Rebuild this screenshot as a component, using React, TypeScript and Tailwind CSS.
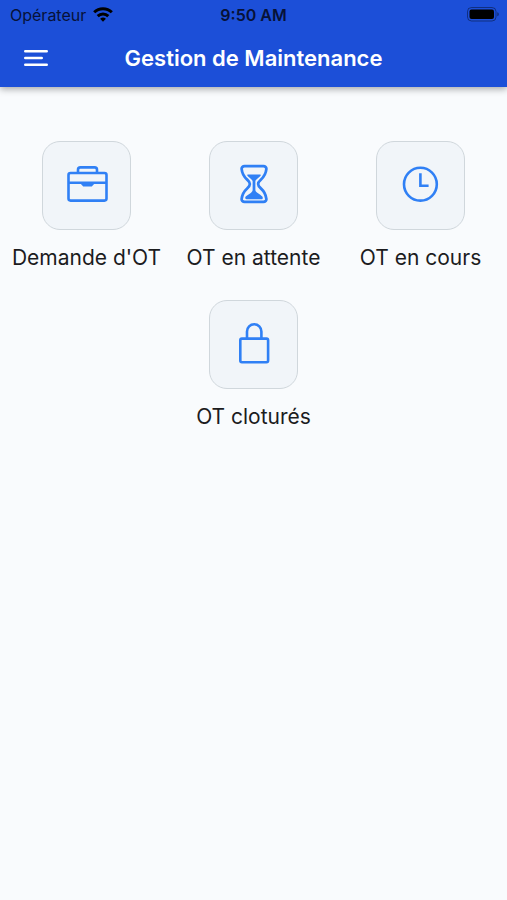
import React from 'react';
import { IoHourglassOutline } from 'react-icons/io5';

interface MenuItem {
  label: string;
  icon: React.ReactNode;
}

function BriefcaseIcon() {
  return (
    <svg className="size-12" viewBox="0 0 48 48" fill="none" stroke="currentColor" strokeWidth="2.6" strokeLinejoin="round" aria-hidden="true">
      <rect x="5.5" y="13" width="38" height="27.6" rx="2" />
      <path d="M15 12.8V9.8a2.4 2.4 0 0 1 2.4-2.4h14.200a2.4 2.4 0 0 1 2.4 2.4v3" />
      <path d="M5.7 22.8h37.6" />
      <path d="M17.9 22.8v1.200l2.300 2.600h8.600l2.300-2.600v-1.200z" fill="currentColor" stroke="none" />
    </svg>
  );
}

function ClockIcon() {
  return (
    <svg className="size-12" viewBox="0 0 48 48" fill="none" stroke="currentColor" strokeWidth="2.6" aria-hidden="true">
      <circle cx="23.4" cy="24.2" r="16.4" />
      <path d="M23.4 13.200v12.500h8.200" />
    </svg>
  );
}

function LockIcon() {
  return (
    <svg className="size-12" viewBox="0 0 48 48" fill="none" stroke="currentColor" strokeWidth="2.6" strokeLinejoin="round" aria-hidden="true">
      <rect x="10.300" y="19.6" width="27.8" height="23.6" rx="1.6" />
      <path d="M17 19.600v-7.200a7.200 7.200 0 0 1 14.400 0v7.200" />
    </svg>
  );
}

const items: MenuItem[] = [
  { label: "Demande d'OT", icon: <BriefcaseIcon /> },
  { label: 'OT en attente', icon: <IoHourglassOutline className="size-11" aria-hidden="true" /> },
  { label: 'OT en cours', icon: <ClockIcon /> },
  { label: 'OT cloturés', icon: <LockIcon /> },
];

function StatusBar() {
  return (
    <div className="grid h-[30px] grid-cols-3 items-center px-2 text-[#071238]">
      <div className="flex items-center gap-[7px] pl-0.5">
        <span className="text-base">Opérateur</span>
        <svg className="h-4 w-5 text-black" viewBox="0 0 20 16" fill="none" stroke="currentColor" strokeWidth="3" aria-hidden="true">
          <path d="M1.2 5.3a12.6 12.6 0 0 1 17.6 0" />
          <path d="M4.700 9.200a7.600 7.600 0 0 1 10.600 0" />
          <path d="M10 14.700 7.100 11.800a4.200 4.200 0 0 1 5.800 0z" fill="currentColor" stroke="none" />
        </svg>
      </div>
      <span className="text-center text-base font-semibold">9:50 AM</span>
      <svg className="h-4 w-8 justify-self-end text-black" viewBox="0 0 32 16" aria-hidden="true">
        <rect x="0.500" y="0.500" width="28.500" height="13.500" rx="4" fill="none" stroke="currentColor" strokeOpacity="0.400" />
        <rect x="2.500" y="2.500" width="24.500" height="9.500" rx="2" fill="currentColor" />
        <path d="M30.300 5.300v4c1-.4 1.500-1.200 1.500-2s-.5-1.600-1.500-2z" fill="currentColor" fillOpacity="0.450" />
      </svg>
    </div>
  );
}

export default function App() {
  return (
    <div className="min-h-screen bg-[#f9fbfd] font-['Inter','Liberation_Sans',sans-serif]">
      {/* Header */}
      <header className="bg-[#1c4fd8] shadow-[0_2px_7px_rgba(0,0,0,0.35)]">
        <StatusBar />
        <div className="grid h-[57px] grid-cols-[48px_1fr_48px] items-center px-3">
          <button type="button" aria-label="Menu" className="flex size-12 items-center justify-center text-white">
            <svg className="h-5 w-6" viewBox="0 0 24 20" fill="none" stroke="currentColor" strokeWidth="2.6" strokeLinecap="round" aria-hidden="true">
              <path d="M1.3 2.300h21.400M1.300 9h16.400M1.300 15.800h21.400" />
            </svg>
          </button>
          <h1 className="text-center text-[22px] font-semibold text-white">Gestion de Maintenance</h1>
        </div>
      </header>

      {/* Menu */}
      <main className="flex flex-wrap justify-center gap-y-7 px-[3px] pt-[54px]">
        {items.map((item) => (
          <button key={item.label} type="button" className="flex w-1/3 flex-col items-center gap-3.5">
            <span className="flex size-[89px] items-center justify-center rounded-[18px] border border-[#d0d7dc] bg-[#f1f5f9] pb-[3px] text-[#3080f5]">
              {item.icon}
            </span>
            <span className="text-[21px] leading-7 whitespace-nowrap text-[#1c1c1e]">{item.label}</span>
          </button>
        ))}
      </main>
    </div>
  );
}
